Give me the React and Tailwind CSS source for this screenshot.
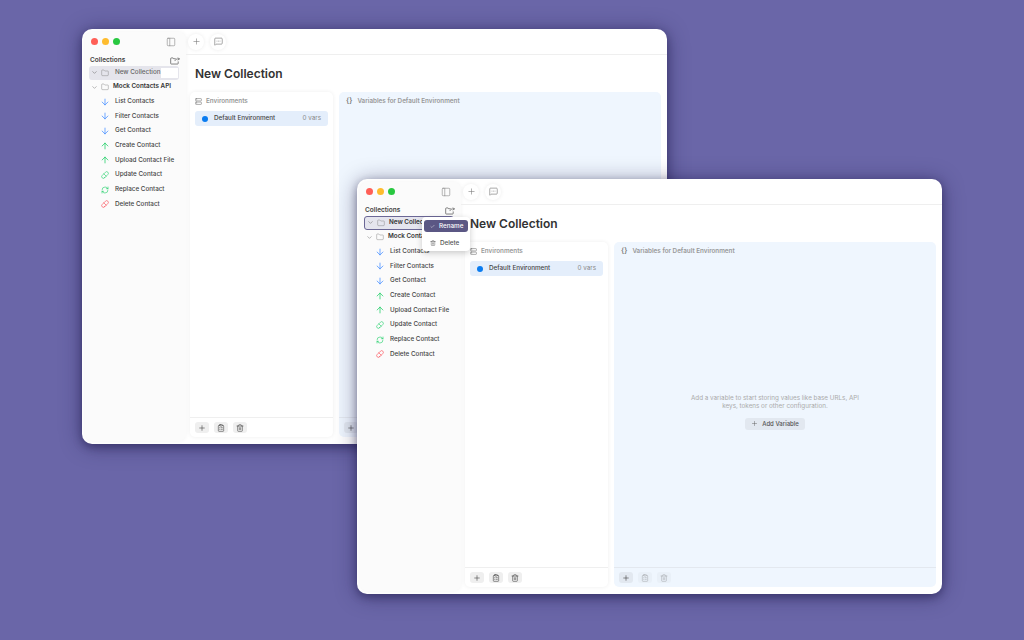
import React from 'react';
import { ArrowDown, ArrowUp, ChevronDown, Check, ClipboardList, Folder, MessageSquareMore, PanelLeft, Pill, Plus, RefreshCw, Server, Trash2 } from 'lucide-react';

const REQUESTS = [
  { name: 'List Contacts', icon: ArrowDown, color: 'text-blue-500 h-[10px] w-[10px]', gap: 'ml-[5px]' },
  { name: 'Filter Contacts', icon: ArrowDown, color: 'text-blue-500 h-[10px] w-[10px]', gap: 'ml-[5px]' },
  { name: 'Get Contact', icon: ArrowDown, color: 'text-blue-500 h-[10px] w-[10px]', gap: 'ml-[5px]' },
  { name: 'Create Contact', icon: ArrowUp, color: 'text-green-500 h-[10px] w-[10px]', gap: 'ml-[5px]' },
  { name: 'Upload Contact File', icon: ArrowUp, color: 'text-green-500 h-[10px] w-[10px]', gap: 'ml-[5px]' },
  { name: 'Update Contact', icon: Pill, color: 'text-green-500 h-[8px] w-[8px] mx-[1px]', gap: 'ml-[5px]' },
  { name: 'Replace Contact', icon: RefreshCw, color: 'text-green-500 h-[8px] w-[8px] mx-[1px]', gap: 'ml-[5px]' },
  { name: 'Delete Contact', icon: Pill, color: 'text-red-500 h-[8px] w-[8px] mx-[1px]', gap: 'ml-[5px]' },
];

function FolderOut() {
  return (
    <svg viewBox="0 0 12 10" className="h-[8px] w-[10px] text-[#555]" fill="none" stroke="currentColor" strokeWidth="0.9" strokeLinecap="round" strokeLinejoin="round">
      <path d="M6.5 2.2H4.4L3.6 1.2H1.4a.8.8 0 0 0-.8.8v6a.8.8 0 0 0 .8.8h7.8a.8.8 0 0 0 .8-.8V6" />
      <path d="M6 4.6c.4-1.4 1.7-2.2 3.2-2.2h2.2M10 1l1.4 1.4L10 3.8" />
    </svg>
  );
}

function FooterButton({ icon: Icon, faded, tint }) {
  return (
    <div className={`flex h-[11px] w-[14px] items-center justify-center rounded-[3px] ${tint ? 'bg-[#e2e8f0]' : 'bg-[#efefef]'} ${faded ? 'opacity-40' : ''}`}>
      <Icon className="h-[8px] w-[8px] text-[#444]" strokeWidth={1.75} />
    </div>
  );
}

function Sidebar({ editing }) {
  return (
    <aside className="flex w-[101px] shrink-0 flex-col rounded-[7px] bg-[#fbfbfb] shadow-[0_0_4px_rgba(0,0,0,0.05)]">
      <div className="flex h-[19px] items-center gap-[4px] pl-[6px] pr-[10px]">
        <span className="h-[7px] w-[7px] rounded-full bg-[#ff5f57]" />
        <span className="h-[7px] w-[7px] rounded-full bg-[#febc2e]" />
        <span className="h-[7px] w-[7px] rounded-full bg-[#28c840]" />
        <PanelLeft className="ml-auto h-[10px] w-[10px] text-[#777]" strokeWidth={1.25} />
      </div>
      <div className="mt-[4.5px] flex h-[10px] items-center justify-between pl-[5px] pr-[6px]">
        <span className="text-[6.5px] font-semibold text-[#444]">Collections</span>
        <FolderOut />
      </div>
      <div className="pl-[4px] pr-[7px]">
        {editing ? (
          <div className="flex h-[14px] items-center rounded-[3px] bg-[#e5e5ec] px-[2px]">
            <ChevronDown className="h-[7px] w-[7px] shrink-0 text-[#777]" />
            <Folder className="ml-[3px] h-[8px] w-[8px] shrink-0 text-[#777]" strokeWidth={1.25} />
            <span className="ml-[6px] whitespace-nowrap text-[6.3px] font-medium text-[#666]">New Collection</span>
            <span className="ml-auto h-[10px] w-[17px] shrink-0 bg-white" />
          </div>
        ) : (
          <div className="flex h-[14px] items-center rounded-[3px] border border-[#6b6796] bg-[#e5e5ee] pl-[2px]">
            <ChevronDown className="h-[7px] w-[7px] text-[#777]" />
            <Folder className="ml-[3px] h-[8px] w-[8px] text-[#777]" strokeWidth={1.25} />
            <span className="ml-[4px] whitespace-nowrap text-[6.3px] font-semibold text-[#333]">New Collection</span>
          </div>
        )}
        <div className="mt-[0.5px] flex h-[14px] items-center pl-[2px]">
          <ChevronDown className="h-[7px] w-[7px] text-[#888]" />
          <Folder className="ml-[3px] h-[8px] w-[8px] text-[#777]" strokeWidth={1.25} />
          <span className="ml-[4px] whitespace-nowrap text-[6.3px] font-semibold text-[#333]">Mock Contacts API</span>
        </div>
        <div className="mt-[0.5px] flex flex-col">
          {REQUESTS.map((r) => (
            <div key={r.name} className="flex h-[14.65px] items-center pl-[11px]">
              <r.icon className={r.color} strokeWidth={1.6} />
              <span className={`${r.gap} whitespace-nowrap text-[6.3px] font-medium text-[#444]`}>{r.name}</span>
            </div>
          ))}
        </div>
      </div>
    </aside>
  );
}

function ContextMenu() {
  return (
    <div className="absolute left-[65px] top-[38px] z-10 flex h-[34px] w-[48px] flex-col rounded-[4px] bg-white px-[2px] pt-[3px] shadow-[0_2px_6px_rgba(0,0,0,0.2)]">
      <div className="flex h-[12px] items-center rounded-[3px] bg-[#5b5784] pl-[6px] text-white">
        <Check className="h-[5px] w-[5px]" strokeWidth={2} />
        <span className="ml-[4px] pt-[1px] text-[6.3px] font-medium">Rename</span>
      </div>
      <div className="mt-[5px] flex h-[12px] items-center pl-[6px] text-[#555]">
        <Trash2 className="h-[6px] w-[6px]" strokeWidth={1.75} />
        <span className="ml-[4px] pt-[1px] text-[6.3px] font-medium">Delete</span>
      </div>
    </div>
  );
}

function AppWindow({ className, editing }) {
  return (
    <div className={`absolute flex h-[415px] w-[585px] gap-[3px] rounded-[10px] bg-white p-[3px] font-['Inter',sans-serif] shadow-[0_3px_8px_rgba(20,15,60,0.4),0_2px_22px_rgba(20,15,60,0.4)] ${className}`}>
      <Sidebar editing={editing} />
      {!editing && <ContextMenu />}
      <main className="flex min-w-0 flex-1 flex-col">
        <div className="-mx-[3px] -mt-[3px] flex h-[26px] shrink-0 items-center gap-[6px] border-b border-[#efefef] pl-[2px]">
          <div className="flex h-[16px] w-[16px] items-center justify-center rounded-full bg-white shadow-[0_0_4px_rgba(0,0,0,0.08)]">
            <Plus className="h-[9px] w-[9px] text-[#777]" strokeWidth={1.5} />
          </div>
          <div className="flex h-[16px] w-[16px] items-center justify-center rounded-full bg-white shadow-[0_0_4px_rgba(0,0,0,0.08)]">
            <MessageSquareMore className="h-[9px] w-[9px] text-[#666]" strokeWidth={1.5} />
          </div>
        </div>
        <h1 className="ml-[6px] mt-[11px] h-[16px] text-[12px] font-semibold leading-[16px] text-[#333]">New Collection</h1>
        <div className="mt-[10px] flex min-h-0 flex-1 gap-[6px] pb-[4px] pl-[1px] pr-[3px]">
          <section className="flex w-[143px] shrink-0 flex-col rounded-[5px] bg-white shadow-[0_0_4px_rgba(0,0,0,0.07)]">
            <div className="flex h-[19px] items-center gap-[4px] pl-[5px]">
              <Server className="h-[7px] w-[7px] text-[#777]" strokeWidth={2} />
              <span className="text-[6.3px] font-semibold text-[#999]">Environments</span>
            </div>
            <div className="mx-[5px] flex h-[15px] items-center rounded-[3px] bg-[#e4eefb] px-[7px]">
              <span className="h-[6px] w-[6px] rounded-full bg-[#0a7cf0]" />
              <span className="ml-[6px] text-[6.3px] font-medium text-[#444]">Default Environment</span>
              <span className="ml-auto text-[6.3px] text-[#888]">0 vars</span>
            </div>
            <div className="mt-auto flex h-[20px] items-center gap-[5px] border-t border-[#efefef] pl-[5px]">
              <FooterButton icon={Plus} />
              <FooterButton icon={ClipboardList} />
              <FooterButton icon={Trash2} />
            </div>
          </section>
          <section className="flex min-w-0 flex-1 flex-col rounded-[5px] bg-[#eff6fe]">
            <div className="flex h-[19px] items-center gap-[5px] pl-[7px]">
              <span className="text-[7px] font-semibold text-[#777]">{'{}'}</span>
              <span className="text-[6.3px] font-semibold text-[#999]">Variables for Default Environment</span>
            </div>
            <div className="flex flex-1 flex-col items-center justify-center pb-[5px]">
              <p className="w-[175px] text-center text-[6.3px] leading-[8.5px] text-[#aaa]">
                Add a variable to start storing values like base URLs, API keys, tokens or other configuration.
              </p>
              <div className="mt-[7px] flex h-[12px] items-center gap-[4px] rounded-[3px] bg-[#e2e8f0] px-[6px]">
                <Plus className="h-[7px] w-[7px] text-[#555]" strokeWidth={1.5} />
                <span className="text-[6px] font-medium text-[#555]">Add Variable</span>
              </div>
            </div>
            <div className="flex h-[20px] items-center gap-[5px] border-t border-[#e3e8ef] pl-[5px]">
              <FooterButton icon={Plus} tint />
              <FooterButton icon={ClipboardList} tint faded />
              <FooterButton icon={Trash2} tint faded />
            </div>
          </section>
        </div>
      </main>
    </div>
  );
}

export default function App() {
  return (
    <div className="relative h-[640px] w-[1024px] overflow-hidden bg-[#6a66a8]">
      <AppWindow editing className="left-[82px] top-[29px]" />
      <AppWindow className="left-[357px] top-[179px]" />
    </div>
  );
}
